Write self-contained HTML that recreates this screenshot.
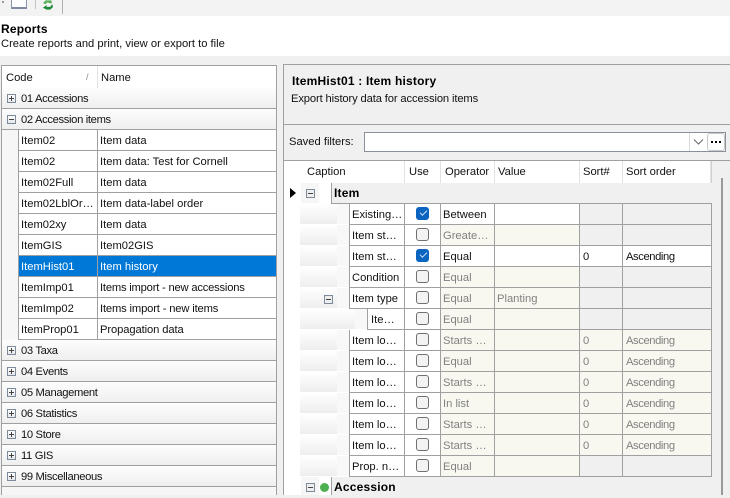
<!DOCTYPE html>
<html><head><meta charset="utf-8"><style>
html,body{margin:0;padding:0}
body{width:730px;height:495px;overflow:hidden;position:relative;background:#f0f0f0;font:11.2px "Liberation Sans",sans-serif;color:#111}
div,span,svg{position:absolute;box-sizing:border-box}
.t{white-space:nowrap;line-height:22px;height:20px}
.bd{font-weight:bold;font-size:12px;letter-spacing:.2px;color:#000}
.g{left:2px;width:274px;height:21px;background:linear-gradient(#fdfdfd,#efefef);border-bottom:1px solid #a0a0a0}
.g .t{left:19px;top:0;letter-spacing:-.33px}
.ex{width:9px;height:9px;border:1px solid #7d8a9a;background:linear-gradient(#fff,#e4e6ea)}
.ex:before{content:"";position:absolute;left:1px;top:3px;width:5px;height:1px;background:#444}
.ex.p:after{content:"";position:absolute;left:3px;top:1px;height:5px;width:1px;background:#444}
.ir{left:18px;width:258px;height:21px;background:#fff;border-bottom:1px solid #a0a0a0;border-left:1px solid #a0a0a0}
.ir .a{left:2px;top:0}.ir .b{left:81px;top:0}
.ir i{position:absolute;left:78px;top:-1px;height:21px;border-left:1px solid #a0a0a0}
.ir.s{background:#0078d7;color:#fff}
.h{top:161px;height:22px;line-height:23px;background:#fff;border-right:1px solid #e2e2e2;padding-left:4px;white-space:nowrap}
.r{left:300px;width:412px;height:21px}
.ind{left:0;top:0;width:37px;height:20px;background:linear-gradient(#fff,#eeeeee)}
.ind2{left:37px;top:0;width:12px;height:20px;background:#f8f8f8}
.c{top:0;height:21px;line-height:22px;border-right:1px solid #a0a0a0;border-bottom:1px solid #a0a0a0;white-space:nowrap;padding-left:3px;overflow:hidden;background:#fff}
.cap{left:49px;width:56px;border-left:1px solid #a0a0a0;padding-left:2px}
.use{left:105px;width:36px}
.op{left:141px;width:54px;padding-left:2px}
.val{left:195px;width:85px;padding-left:2px}
.sn{left:280px;width:43px;padding-left:3px}
.so{left:323px;width:89px;padding-left:3px;letter-spacing:-.4px}
.d{background:#f9f8f0;color:#808080}
.x{background:#f0f0f0}
.cb{left:11px;top:3px;width:13px;height:13px;border:1px solid #707070;border-radius:3px;background:#f3f3f3}
.cb.on{background:#0a64c0;border-color:#0a64c0}
.cb.on:after{content:"";position:absolute;left:3px;top:2px;width:6px;height:3px;border-left:1px solid #cfe2f5;border-bottom:1px solid #cfe2f5;transform:rotate(-45deg)}
.gh{left:331px;width:381px;height:21px;background:#f0f0f0;border-left:1px solid #a0a0a0;border-bottom:1px solid #a0a0a0;font-weight:bold;font-size:12px;letter-spacing:.2px;line-height:21px;padding-left:2px;color:#000}
</style></head><body>
<!-- toolbar -->
<div style="left:0;top:0;width:730px;height:16px;background:#f3f3f3"></div>
<div style="left:2px;top:1px;width:2px;height:2px;background:#999"></div>
<div style="left:11px;top:-4px;width:16px;height:13px;background:#fdfdff;border:1px solid #8a94a8;border-bottom:2px solid #7f8aa0"></div>
<div style="left:35px;top:0;width:1px;height:9px;background:#c4c4c4"></div>
<svg style="left:42px;top:0" width="12" height="10" viewBox="0 0 13 10"><path d="M1 3 L4 0 L10 0 L11 3 L8 3 L6 2 L4 4Z" fill="#58b058"/><path d="M11 4 L9 7 L5 7 L5 5 L1 8 L5 10 L9 10 L12 7Z" fill="#1f8a3a"/></svg>
<div style="left:62px;top:0;width:1px;height:14px;background:#b0b0b0"></div>
<!-- title -->
<div style="left:0;top:16px;width:730px;height:40px;background:#fff"></div>
<div class="t bd" style="left:1px;top:18px">Reports</div>
<div class="t" style="left:1px;top:33px">Create reports and print, view or export to file</div>
<!-- left panel -->
<div style="left:1px;top:65px;width:276px;height:430px;border:1px solid #a0a0a0;border-bottom:0;background:#f6f6f6"></div>
<div style="left:2px;top:66px;width:274px;height:22px;background:#fff"></div>
<div style="left:97px;top:66px;width:1px;height:22px;background:#e2e2e2"></div>
<div class="t" style="left:6px;top:67px">Code</div>
<div class="t" style="left:86px;top:66px;color:#888;font-size:9px">/</div>
<div class="t" style="left:101px;top:67px">Name</div>

<div class="g" style="top:88px"><div class="t">01 Accessions</div></div><div class="ex p" style="left:7px;top:94px"></div>
<div class="g" style="top:109px;height:21px"><div class="t">02 Accession items</div></div><div class="ex" style="left:7px;top:115px"></div>
<div style="left:18px;top:129px;width:258px;height:1px;background:#a0a0a0"></div>

<div class="ir" style="top:130px"><div class="t a">Item02</div><i></i><div class="t b">Item data</div></div>
<div class="ir" style="top:151px"><div class="t a">Item02</div><i></i><div class="t b">Item data: Test for Cornell</div></div>
<div class="ir" style="top:172px"><div class="t a">Item02Full</div><i></i><div class="t b">Item data</div></div>
<div class="ir" style="top:193px"><div class="t a">Item02LblOr…</div><i></i><div class="t b">Item data-label order</div></div>
<div class="ir" style="top:214px"><div class="t a">Item02xy</div><i></i><div class="t b">Item data</div></div>
<div class="ir" style="top:235px"><div class="t a">ItemGIS</div><i></i><div class="t b">Item02GIS</div></div>
<div class="ir s" style="top:256px"><div class="t a">ItemHist01</div><i></i><div class="t b">Item history</div></div>
<div class="ir" style="top:277px"><div class="t a">ItemImp01</div><i></i><div class="t b" style="letter-spacing:-.2px">Items import - new accessions</div></div>
<div class="ir" style="top:298px"><div class="t a">ItemImp02</div><i></i><div class="t b" style="letter-spacing:-.15px">Items import - new items</div></div>
<div class="ir" style="top:319px"><div class="t a">ItemProp01</div><i></i><div class="t b" style="letter-spacing:-.1px">Propagation data</div></div>

<div class="g" style="top:340px"><div class="t">03 Taxa</div></div><div class="ex p" style="left:7px;top:346px"></div>
<div class="g" style="top:361px"><div class="t">04 Events</div></div><div class="ex p" style="left:7px;top:367px"></div>
<div class="g" style="top:382px"><div class="t">05 Management</div></div><div class="ex p" style="left:7px;top:388px"></div>
<div class="g" style="top:403px"><div class="t">06 Statistics</div></div><div class="ex p" style="left:7px;top:409px"></div>
<div class="g" style="top:424px"><div class="t">10 Store</div></div><div class="ex p" style="left:7px;top:430px"></div>
<div class="g" style="top:445px"><div class="t">11 GIS</div></div><div class="ex p" style="left:7px;top:451px"></div>
<div class="g" style="top:466px"><div class="t">99 Miscellaneous</div></div><div class="ex p" style="left:7px;top:472px"></div>

<!-- right panel -->
<div style="left:283px;top:64px;width:447px;height:431px;border-left:1px solid #a0a0a0;border-top:1px solid #a0a0a0;background:#f0f0f0"></div>
<div style="left:283px;top:124px;width:447px;height:1px;background:#a0a0a0"></div>
<div class="t bd" style="left:292px;top:70px">ItemHist01 : Item history</div>
<div class="t" style="left:291px;top:88px;letter-spacing:-.13px">Export history data for accession items</div>
<div class="t" style="left:289px;top:131px">Saved filters:</div>
<div style="left:364px;top:132px;width:362px;height:20px;background:#fff;border:1px solid #8a8f9c"></div>
<div style="left:689px;top:133px;width:1px;height:18px;background:#d8d8d8"></div>
<svg style="left:693px;top:139px" width="11" height="6" viewBox="0 0 11 6"><path d="M1 0.5 L5.5 5 L10 0.5" fill="none" stroke="#666" stroke-width="1"/></svg>
<div style="left:707px;top:133px;width:18px;height:18px;background:#fdfdfd;border:1px solid #c8c8c8;border-radius:3px"></div>
<div style="left:711px;top:141px;width:2px;height:2px;background:#000"></div>
<div style="left:715px;top:141px;width:2px;height:2px;background:#000"></div>
<div style="left:719px;top:141px;width:2px;height:2px;background:#000"></div>

<!-- grid -->
<div style="left:284px;top:161px;width:446px;height:334px;background:#fff"></div>
<div style="left:283px;top:160px;width:447px;height:1px;background:#a0a0a0"></div>
<div class="h" style="left:304px;width:101px;padding-left:3px">Caption</div>
<div class="h" style="left:405px;width:36px">Use</div>
<div class="h" style="left:441px;width:54px">Operator</div>
<div class="h" style="left:495px;width:85px;padding-left:3px">Value</div>
<div class="h" style="left:580px;width:43px;padding-left:3px">Sort#</div>
<div class="h" style="left:623px;width:88px;padding-left:3px">Sort order</div>
<div style="left:711px;top:161px;width:19px;height:334px;background:#f0f0f0;border-left:1px solid #d0d0d0"></div>
<div style="left:721px;top:178px;width:2px;height:317px;background:#9a9a9a"></div>

<svg style="left:290px;top:188px" width="6" height="10" viewBox="0 0 6 10"><path d="M0 0 L6 5 L0 10Z" fill="#000"/></svg>
<div style="left:301px;top:183px;width:18px;height:20px;background:#f6f6f6"></div>
<div class="ex" style="left:306px;top:189px;background:#eee"></div>
<div class="gh" style="top:183px">Item</div>

<div class="r" style="top:204px"><div class="ind"></div><div class="ind2"></div><div class="c cap">Existing…</div><div class="c use"><div class="cb on"></div></div><div class="c op">Between</div><div class="c val"></div><div class="c sn x"></div><div class="c so x"></div></div>
<div class="r" style="top:225px"><div class="ind"></div><div class="ind2"></div><div class="c cap">Item st…</div><div class="c use"><div class="cb"></div></div><div class="c op d">Greate…</div><div class="c val d"></div><div class="c sn x"></div><div class="c so x"></div></div>
<div class="r" style="top:246px"><div class="ind"></div><div class="ind2"></div><div class="c cap">Item st…</div><div class="c use"><div class="cb on"></div></div><div class="c op">Equal</div><div class="c val"></div><div class="c sn">0</div><div class="c so">Ascending</div></div>
<div class="r" style="top:267px"><div class="ind"></div><div class="ind2"></div><div class="c cap">Condition</div><div class="c use"><div class="cb"></div></div><div class="c op d">Equal</div><div class="c val d"></div><div class="c sn x"></div><div class="c so x"></div></div>
<div class="r" style="top:288px"><div class="ind"></div><div class="ind2"></div><div class="c cap">Item type</div><div class="c use"><div class="cb"></div></div><div class="c op d">Equal</div><div class="c val d">Planting</div><div class="c sn x"></div><div class="c so x"></div></div>
<div class="ex" style="left:324px;top:295px;background:#eee"></div>
<div class="r" style="top:309px"><div class="ind" style="width:55px"></div><div class="ind2" style="left:55px"></div><div class="c cap" style="left:67px;width:38px;padding-left:3px">Ite…</div><div class="c use"><div class="cb"></div></div><div class="c op d">Equal</div><div class="c val d"></div><div class="c sn x"></div><div class="c so x"></div></div>
<div class="r" style="top:330px"><div class="ind"></div><div class="ind2"></div><div class="c cap">Item lo…</div><div class="c use"><div class="cb"></div></div><div class="c op d">Starts …</div><div class="c val d"></div><div class="c sn d">0</div><div class="c so d">Ascending</div></div>
<div class="r" style="top:351px"><div class="ind"></div><div class="ind2"></div><div class="c cap">Item lo…</div><div class="c use"><div class="cb"></div></div><div class="c op d">Equal</div><div class="c val d"></div><div class="c sn d">0</div><div class="c so d">Ascending</div></div>
<div class="r" style="top:372px"><div class="ind"></div><div class="ind2"></div><div class="c cap">Item lo…</div><div class="c use"><div class="cb"></div></div><div class="c op d">Starts …</div><div class="c val d"></div><div class="c sn d">0</div><div class="c so d">Ascending</div></div>
<div class="r" style="top:393px"><div class="ind"></div><div class="ind2"></div><div class="c cap">Item lo…</div><div class="c use"><div class="cb"></div></div><div class="c op d">In list</div><div class="c val d"></div><div class="c sn d">0</div><div class="c so d">Ascending</div></div>
<div class="r" style="top:414px"><div class="ind"></div><div class="ind2"></div><div class="c cap">Item lo…</div><div class="c use"><div class="cb"></div></div><div class="c op d">Starts …</div><div class="c val d"></div><div class="c sn d">0</div><div class="c so d">Ascending</div></div>
<div class="r" style="top:435px"><div class="ind"></div><div class="ind2"></div><div class="c cap">Item lo…</div><div class="c use"><div class="cb"></div></div><div class="c op d">Starts …</div><div class="c val d"></div><div class="c sn d">0</div><div class="c so d">Ascending</div></div>
<div class="r" style="top:456px"><div class="ind"></div><div class="ind2"></div><div class="c cap">Prop. n…</div><div class="c use"><div class="cb"></div></div><div class="c op d">Equal</div><div class="c val d"></div><div class="c sn x"></div><div class="c so x"></div></div>

<div style="left:301px;top:477px;width:18px;height:18px;background:#f6f6f6"></div>
<div class="ex" style="left:306px;top:483px;background:#eee"></div>
<div style="left:320px;top:483px;width:9px;height:9px;border-radius:50%;background:#4caf50"></div>
<div class="gh" style="top:477px;height:18px;border-bottom:0">Accession</div>
</body></html>
